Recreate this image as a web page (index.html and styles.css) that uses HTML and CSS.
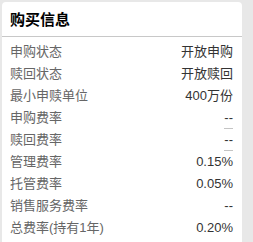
FILE: index.html
```html
<!DOCTYPE html>
<html lang="zh">
<head>
<meta charset="utf-8">
<link rel="stylesheet" href="styles.css">
</head>
<body>
<div class="card">
  <div class="card-head">购买信息</div>
  <ul class="info-list">
    <li class="row"><span class="label">申购状态</span><span class="value">开放申购</span></li>
    <li class="row"><span class="label">赎回状态</span><span class="value">开放赎回</span></li>
    <li class="row"><span class="label">最小申赎单位</span><span class="value">400万份</span></li>
    <li class="row"><span class="label">申购费率</span><span class="value hint">--</span></li>
    <li class="row"><span class="label">赎回费率</span><span class="value hint">--</span></li>
    <li class="row"><span class="label">管理费率</span><span class="value">0.15%</span></li>
    <li class="row"><span class="label">托管费率</span><span class="value">0.05%</span></li>
    <li class="row"><span class="label">销售服务费率</span><span class="value">--</span></li>
    <li class="row"><span class="label">总费率(持有1年)</span><span class="value">0.20%</span></li>
  </ul>
</div>
</body>
</html>
```
FILE: styles.css
```css
html, body {
  margin: 0;
  padding: 0;
  background: #e8e8e8;
  font-family: "Liberation Sans", Arial, "Noto Sans CJK SC", sans-serif;
}
.card {
  margin: 2px 0 0 2px;
  width: 240px;
  height: 240px;
  background: #fff;
  border-radius: 4px 4px 0 0;
}
.card-head {
  height: 34px;
  line-height: 35px;
  padding-left: 8px;
  font-size: 15px;
  font-weight: bold;
  color: #000;
  border-bottom: 1px solid #c8c8c8;
}
.info-list {
  list-style: none;
  margin: 0;
  padding: 4px 9px 0 8px;
}
.row {
  display: flex;
  justify-content: space-between;
  align-items: flex-start;
  height: 22px;
  line-height: 22px;
  font-size: 13px;
}
.label {
  color: #666;
}
.value {
  color: #333;
}
.hint {
  display: inline-block;
  line-height: 21px;
  border-bottom: 1px solid #c4c4c4;
}
```
